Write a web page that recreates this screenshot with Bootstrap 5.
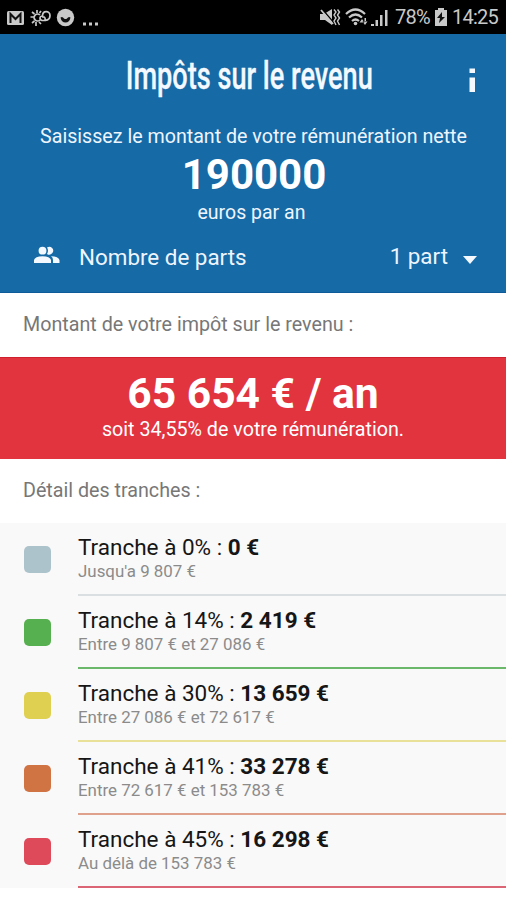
<!DOCTYPE html>
<html lang="fr">
<head>
<meta charset="utf-8">
<meta name="viewport" content="width=device-width, initial-scale=1">
<title>Impôts sur le revenu</title>
<link href="https://cdn.jsdelivr.net/npm/bootstrap@5.3.0/dist/css/bootstrap.min.css" rel="stylesheet">
<style>
body{font-family:Roboto,"Liberation Sans",sans-serif;background:#fff;width:506px;height:900px;overflow:hidden}
.status{height:34px;background:#000;color:#c9c9c9;font-size:20px;line-height:36px;letter-spacing:-.75px}
.hero{height:259px;background:#166aa6;border-bottom:1px solid #0d5b98;color:#eef5ff}
.titlebar{height:84px}
.app-title{font-size:38.5px;line-height:84px;font-weight:500;color:#f4f9ff;-webkit-text-stroke:.3px #f4f9ff;white-space:nowrap;transform:scaleX(.705);transform-origin:center;margin-left:-7px}
.info-btn{right:27px;top:34px}
.prompt{font-size:19.65px;line-height:24px;margin-top:6px;padding-left:1px;padding-top:1px}
.income{font-size:42px;line-height:52px;font-weight:700;color:#fff;padding-left:2px}
.per-year{font-size:19.5px;line-height:24px;padding-right:3px}
.parts{height:46px;margin-top:9px;padding:0 29px 0 34px;font-size:22.4px}
.people{margin-top:-5px}
.parts-label{margin-left:19px;padding-top:2px}
.caret{margin:6px 0 0 15px}
.label-row{height:64px;line-height:64px;padding-left:23px;font-size:19.7px;color:#777}
.result{height:102px;background:#e1343f;color:#fff;border-top:1px solid #d0202e}
.total{font-size:42.6px;line-height:48px;font-weight:700;padding-top:11px}
.share{font-size:19.7px;line-height:24px;padding-top:1px}
.brackets{background:#f9f9f9}
.bracket{height:73.1px;padding-left:24px}
.swatch{width:27px;height:27px;border-radius:5px;background:var(--c)}
.detail{margin-left:27px;border-bottom:2px solid var(--l);padding-top:9.6px}
.rate{font-size:22.5px;line-height:28px;color:#161616;white-space:nowrap}
.range{font-size:16.9px;line-height:20px;color:#8b8b8b;white-space:nowrap}
</style>
</head>
<body>
<header class="status d-flex align-items-center justify-content-between">
  <div class="d-flex align-items-center">
    <svg width="110" height="34" fill="#c9c9c9">
      <rect x="7" y="11" width="17" height="14" rx="1.5"/>
      <path d="M10.500 23V14l5 5 5-5v9" fill="none" stroke="#111" stroke-width="2"/>
      <g fill="none" stroke="#c9c9c9" stroke-width="1.700">
        <path d="M40 15a3.500 3.500 0 1 0 0 5M37 10v3M36 22v4M30.500 17h3M32 12l2.500 2M32 23l2.500-2M41 11l-1.500 2M41 24l-2-2"/>
        <path d="M42 20.500c-3-1-2.500-4.500.5-4.500 0-6 7.500-5.500 7.500-.5s-4 5-8 5zM42 17c3-.5 3.500 1 3 3.500"/>
      </g>
      <circle cx="65.500" cy="17.500" r="8.700"/>
      <path d="M60.500 17.500q2-1.500 3.500 1 1.500 1 3 0 1.500-2.500 3.500-1-1 5-5 5t-5-5z" fill="#111"/>
      <path d="M83 22.500h3v3h-3zM89 22.500h3v3h-3zM95 22.500h3v3h-3z"/>
    </svg>
  </div>
  <div class="d-flex align-items-center pe-2">
    <svg width="77" height="34" viewBox="320 0 77 34" fill="#c9c9c9">
      <path d="M322 14h4l8-5v16l-7-5h-5z"/>
      <path d="M324 9l12 14" stroke="#000" stroke-width="1.500"/><path d="M323 10l12 14" stroke="#c9c9c9" stroke-width="1.800"/>
      <path d="M336 9.500l2 2.500-2 3 2 3-2 3 2 4M339.500 9.500l2 2.500-2 3 2 3-2 3 2 4" stroke="#c9c9c9" stroke-width="1.400" fill="none"/>
      <path d="M348 14q9.500-9 19 0M351 17.500q6.500-6 13 0M354 21q3.500-3 7 0" stroke="#c9c9c9" stroke-width="2.200" fill="none"/>
      <circle cx="357.500" cy="23.500" r="1.800"/>
      <path d="M361.500 22.500l2.500-3.500 2.500 3.500zM364.500 21.500l2.500 3.500 2.500-3.500zM366.500 18h1.500v4h-1.500z"/>
      <path d="M373 24h3v2h-3zM377.500 20h2.500v6h-2.500zM382 15h2.500v11H382zM387 10h2.500v16H387z"/>
    </svg>
    <span>78%</span>
    <svg class="ms-1" width="14" height="20" viewBox="0 0 14 20"><path d="M4 1h6v2h3v16H1V3h3z" fill="#c9c9c9"/><path d="M8 5l-5 6h3l-1 5 6-6H8z" fill="#111"/></svg>
    <span class="ms-1">14:25</span>
  </div>
</header>
<main>
  <section class="hero text-center">
    <div class="titlebar position-relative d-flex justify-content-center">
      <h1 class="app-title mb-0">Impôts sur le revenu</h1>
      <svg class="info-btn position-absolute" width="14" height="26" fill="#f4f9ff"><path d="M4.500.5h5.500V5H4.500zM4.500 9.500h5.500V24H4.500z"/></svg>
    </div>
    <div class="prompt">Saisissez le montant de votre rémunération nette</div>
    <div class="income">190000</div>
    <div class="per-year">euros par an</div>
    <div class="parts d-flex align-items-center">
      <svg class="people" width="26" height="18" fill="#f4f9ff"><circle cx="8.500" cy="4.700" r="3.900"/><path d="M13 1.500a3.900 3.900 0 1 1 0 6.400q2-3.200 0-6.400zM0 17v-3q1-3.800 8.500-3.800T17 14v3zM17 10.300q7.500.2 8.500 3.700v3H19v-3q0-2.500-2-3.700z"/></svg>
      <span class="parts-label">Nombre de parts</span>
      <span class="ms-auto">1 part</span>
      <svg class="caret" width="14" height="8" fill="#f4f9ff"><path d="M0 0h14L7 8z"/></svg>
    </div>
  </section>
  <div class="label-row">Montant de votre impôt sur le revenu :</div>
  <section class="result text-center">
    <div class="total">65 654 € / an</div>
    <div class="share">soit 34,55% de votre rémunération.</div>
  </section>
  <div class="label-row">Détail des tranches :</div>
  <section class="brackets">
    <div class="bracket d-flex align-items-center" style="--c:#adc3cc;--l:#dae0e2"><span class="swatch"></span><div class="detail flex-grow-1 h-100"><div class="rate">Tranche à 0% : <b>0 €</b></div><div class="range">Jusqu'a 9 807 €</div></div></div>
    <div class="bracket d-flex align-items-center" style="--c:#57b04f;--l:#6bb86a"><span class="swatch"></span><div class="detail flex-grow-1 h-100"><div class="rate">Tranche à 14% : <b>2 419 €</b></div><div class="range">Entre 9 807 € et 27 086 €</div></div></div>
    <div class="bracket d-flex align-items-center" style="--c:#dfd052;--l:#e9e09a"><span class="swatch"></span><div class="detail flex-grow-1 h-100"><div class="rate">Tranche à 30% : <b>13 659 €</b></div><div class="range">Entre 27 086 € et 72 617 €</div></div></div>
    <div class="bracket d-flex align-items-center" style="--c:#d07444;--l:#dfa18c"><span class="swatch"></span><div class="detail flex-grow-1 h-100"><div class="rate">Tranche à 41% : <b>33 278 €</b></div><div class="range">Entre 72 617 € et 153 783 €</div></div></div>
    <div class="bracket d-flex align-items-center" style="--c:#df4a5b;--l:#db6574"><span class="swatch"></span><div class="detail flex-grow-1 h-100"><div class="rate">Tranche à 45% : <b>16 298 €</b></div><div class="range">Au délà de 153 783 €</div></div></div>
  </section>
</main>
<script src="https://cdn.jsdelivr.net/npm/bootstrap@5.3.0/dist/js/bootstrap.bundle.min.js"></script>
</body>
</html>
